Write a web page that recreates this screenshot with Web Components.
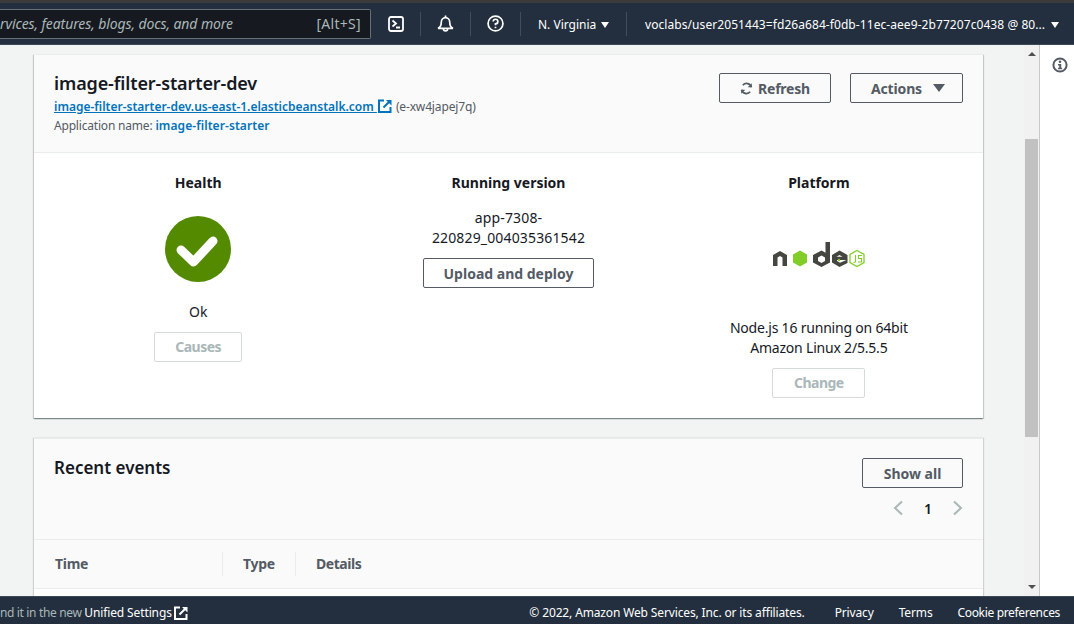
<!DOCTYPE html>
<html lang="en">
<head>
<meta charset="utf-8">
<title>image-filter-starter-dev</title>
<style>
    html, body {
        margin: 0;
        height: 100%;
        overflow: hidden;
        font-family: "Noto Sans", sans-serif;
        color: #16191f;
    }
    body {
        display: flex;
        flex-direction: column;
        height: 624px;
    }
</style>
</head>
<body>
<aws-nav></aws-nav>
<console-area>
    <env-summary></env-summary>
    <recent-events></recent-events>
</console-area>
<aws-footer></aws-footer>

<script>
const externalIcon = (size, color) => `<svg viewBox="0 0 14 14" width="${size}" height="${size}" fill="none" stroke="${color}" stroke-width="2" style="flex:none">
    <path d="M6 1.500H1v11.500h11.500V8"/><path d="M5.500 8.500L12.500 1.500"/><path d="M8 1h5.500v5.500z" fill="${color}" stroke="none"/></svg>`;

class AwsButton extends HTMLElement {
    constructor() {
        super();
        this.shadowDOM = this.attachShadow({mode: "open"});
    }
    connectedCallback() {
        const disabled = this.hasAttribute("disabled");
        this.shadowDOM.innerHTML = `
        <style>
            :host {
                display: inline-flex;
                box-sizing: border-box;
                height: 30px;
                align-items: center;
                justify-content: center;
                gap: 5px;
                padding-bottom: ${disabled ? "1px" : "0"};
                border: 1px solid ${disabled ? "#d5dbdb" : "#545b64"};
                border-radius: 2px;
                background: ${disabled ? "#fff" : "transparent"};
                color: ${disabled ? "#aab7b8" : "#545b64"};
                letter-spacing: ${disabled ? "-0.5px" : "0"};
                font: 700 14px "Noto Sans", sans-serif;
            }
        </style>
        <slot></slot>`;
    }
}
customElements.define("aws-button", AwsButton);

class AwsNav extends HTMLElement {
    constructor() {
        super();
        this.shadowDOM = this.attachShadow({mode: "open"});
    }
    connectedCallback() {
        this.shadowDOM.innerHTML = `
        <style>
            :host {
                display: flex;
                flex: none;
                box-sizing: border-box;
                height: 45px;
                border-top: 3px solid #3b3b3b;
                border-bottom: 1px solid #3c4757;
                background: #232f3e;
                color: #fff;
                align-items: center;
                font: 400 12px "Noto Sans", sans-serif;
                overflow: hidden;
                white-space: nowrap;
            }
            .search {
                flex: none;
                box-sizing: border-box;
                width: 371px;
                height: 30px;
                display: flex;
                align-items: center;
                justify-content: space-between;
                padding: 0 9px 0 0;
                background: #16191f;
                border: 1px solid #687078;
                border-left: 0;
                border-radius: 0 2px 2px 0;
                color: #aab7b8;
                font-size: 14px;
            }
            .search i { font-style: italic; letter-spacing: -.1px; }
            .search span { letter-spacing: .3px; }
            .icon {
                flex: none;
                width: 50px;
                height: 24px;
                display: flex;
                align-items: center;
                justify-content: center;
                border-right: 1px solid #414d5c;
                box-sizing: border-box;
            }
            .region {
                flex: none;
                box-sizing: border-box;
                width: 106px;
                height: 24px;
                padding: 1px 0 0 17px;
                display: flex;
                align-items: center;
                gap: 5px;
                border-right: 1px solid #414d5c;
            }
            .user {
                flex: none;
                padding: 1px 0 0 18px;
                display: flex;
                align-items: center;
                gap: 6px;
                letter-spacing: .07px;
            }
            .tri {
                width: 0;
                height: 0;
                border-left: 4.5px solid transparent;
                border-right: 4.5px solid transparent;
                border-top: 6px solid #fff;
                margin-top: 1px;
            }
        </style>
        <div class="search"><i>rvices, features, blogs, docs, and more</i><span>[Alt+S]</span></div>
        <div class="icon">
            <svg viewBox="0 0 16 16" width="16" height="16" fill="none" stroke="#fff" stroke-width="1.800">
                <rect x="1" y="1" width="14" height="14" rx="2"/><path d="M4.500 4.500L8 7.500l-3.500 3M8 11.500h4"/></svg>
        </div>
        <div class="icon">
            <svg viewBox="0 0 16 16" width="17" height="17" fill="none" stroke="#fff" stroke-width="1.600">
                <path d="M1 12.500c2-1 3-3 3-5.500 0-2.500 1.700-4.500 4-4.500s4 2 4 4.500c0 2.500 1 4.500 3 5.500z"/><path d="M8 .5v2M6 13a2 2 0 0 0 4 0"/></svg>
        </div>
        <div class="icon">
            <svg viewBox="0 0 16 16" width="17" height="17" fill="none" stroke="#fff" stroke-width="1.600">
                <circle cx="8" cy="8" r="7"/><path d="M5.800 6.200A2.200 2.200 0 1 1 8 8.400v1.300M8 11v1.500"/></svg>
        </div>
        <div class="region">N. Virginia <span class="tri"></span></div>
        <div class="user">voclabs/user2051443=fd26a684-f0db-11ec-aee9-2b77207c0438 @ 80... <span class="tri"></span></div>`;
    }
}
customElements.define("aws-nav", AwsNav);

class ConsoleArea extends HTMLElement {
    constructor() {
        super();
        this.shadowDOM = this.attachShadow({mode: "open"});
    }
    connectedCallback() {
        this.shadowDOM.innerHTML = `
        <style>
            :host {
                display: flex;
                flex: 1;
                min-height: 0;
                background: #f2f3f3;
            }
            .content {
                flex: none;
                box-sizing: border-box;
                width: 1024px;
                padding: 9px 41px 0 34px;
                display: flex;
                flex-direction: column;
                gap: 20px;
                overflow: hidden;
            }
            .scrollbar {
                flex: none;
                box-sizing: border-box;
                width: 15px;
                background: #f1f1f1;
                display: flex;
                flex-direction: column;
                align-items: center;
                padding-top: 7px;
            }
            .arrow {
                flex: none;
                width: 0;
                height: 0;
                border-left: 4px solid transparent;
                border-right: 4px solid transparent;
            }
            .arrow.up { border-bottom: 4px solid #505050; }
            .arrow.down { border-top: 4px solid #505050; margin-top: 148px; }
            .thumb {
                flex: none;
                width: 13px;
                height: 298px;
                margin-top: 83px;
                background: #c1c1c1;
            }
            .side {
                flex: 1;
                background: #fff;
                border-left: 1px solid #c8c8c8;
                display: flex;
                justify-content: center;
                padding: 12px 0 0 6px;
                align-items: flex-start;
            }
        </style>
        <div class="content"><slot></slot></div>
        <div class="scrollbar">
            <div class="arrow up"></div>
            <div class="thumb"></div>
            <div class="arrow down"></div>
        </div>
        <div class="side">
            <svg viewBox="0 0 16 16" width="16" height="16">
                <circle cx="8" cy="8" r="6.600" fill="none" stroke="#545b64" stroke-width="2"/>
                <circle cx="8" cy="4.800" r="1.300" fill="#545b64"/>
                <path d="M6 7h3.200v3.800h1v1.500H6v-1.500h1.200V8.400H6z" fill="#545b64"/></svg>
        </div>`;
    }
}
customElements.define("console-area", ConsoleArea);

class EnvSummary extends HTMLElement {
    constructor() {
        super();
        this.shadowDOM = this.attachShadow({mode: "open"});
    }
    connectedCallback() {
        this.shadowDOM.innerHTML = `
        <style>
            :host {
                display: block;
                flex: none;
                height: 364px;
                box-sizing: border-box;
                background: #fff;
                border-top: 1px solid #eaeded;
                box-shadow: 0 1px 1px 0 rgba(0, 28, 36, .3), 1px 1px 1px 0 rgba(0, 28, 36, .15), -1px 1px 1px 0 rgba(0, 28, 36, .15);
                font: 400 14px "Noto Sans", sans-serif;
                color: #16191f;
            }
            header {
                box-sizing: border-box;
                height: 98px;
                background: #fafafa;
                border-bottom: 1px solid #eaeded;
                padding: 16px 20px 0;
                display: flex;
                justify-content: space-between;
            }
            h2 {
                margin: 0;
                font-size: 18px;
                line-height: 24px;
                font-weight: 600;
                letter-spacing: -.12px;
            }
            .url {
                display: flex;
                align-items: center;
                height: 20px;
                margin-top: 1px;
                font-size: 12px;
                color: #545b64;
                white-space: nowrap;
            }
            .url .id { margin-left: 4px; letter-spacing: -.15px; }
            a { color: #0073bb; font-weight: 600; }
            .url a { white-space: pre; margin-right: 1px; }
            .app {
                height: 18px;
                line-height: 18px;
                margin-top: 1px;
                font-size: 12px;
                color: #545b64;
                letter-spacing: -.19px;
            }
            .app a { text-decoration: none; letter-spacing: .08px; }
            .actions { display: flex; gap: 19px; padding-top: 2px; }
            .tri {
                width: 0;
                height: 0;
                border-left: 6px solid transparent;
                border-right: 6px solid transparent;
                border-top: 8px solid #545b64;
                margin-left: 6px;
            }
            .cols {
                display: grid;
                grid-template-columns: repeat(3, 1fr);
                padding: 20px 9px 0;
                text-align: center;
            }
            .col {
                display: flex;
                flex-direction: column;
                align-items: center;
            }
            h3 {
                margin: 0;
                font-size: 14px;
                line-height: 20px;
                font-weight: 700;
            }
            .line { line-height: 20px; }
            .logo { margin-top: 47px; }
            .platform-text { margin-top: 48px; letter-spacing: -.2px; }
        </style>
        <header>
            <div>
                <h2>image-filter-starter-dev</h2>
                <div class="url">
                    <a href="#">image-filter-starter-dev.us-east-1.elasticbeanstalk.com </a>
                    ${externalIcon(14, "#0073bb")}
                    <span class="id">(e-xw4japej7q)</span>
                </div>
                <div class="app">Application name: <a href="#">image-filter-starter</a></div>
            </div>
            <div class="actions">
                <aws-button style="width:112px;letter-spacing:-.2px">
                    <svg viewBox="0 0 16 16" width="13" height="13" fill="none" stroke="#545b64" stroke-width="2.200">
                        <path d="M14 6.500A6 6 0 0 0 3.500 4M2 9.500A6 6 0 0 0 12.500 12"/>
                        <path d="M14.500 1.500v5h-5zM1.500 14.500v-5h5z" fill="#545b64" stroke="none"/></svg>
                    Refresh</aws-button>
                <aws-button style="width:113px;padding-left:3px;letter-spacing:-.15px">Actions <span class="tri"></span></aws-button>
            </div>
        </header>
        <div class="cols">
            <div class="col">
                <h3>Health</h3>
                <svg viewBox="0 0 66 66" width="66" height="66" style="margin-top:23px">
                    <circle cx="33" cy="33" r="33" fill="#538a00"/>
                    <path d="M16 34l12.500 12L48 25" fill="none" stroke="#fff" stroke-width="9" stroke-linecap="round" stroke-linejoin="round"/></svg>
                <div class="line" style="margin-top:20px">Ok</div>
                <aws-button disabled style="width:88px;margin-top:10px">Causes</aws-button>
            </div>
            <div class="col">
                <h3>Running version</h3>
                <div class="line" style="margin-top:15px;width:200px;letter-spacing:.15px">app-7308-<br>220829_004035361542</div>
                <aws-button style="width:171px;margin-top:10px">Upload and deploy</aws-button>
            </div>
            <div class="col">
                <h3>Platform</h3>
                <svg class="logo" viewBox="0 0 94 30" width="94" height="30">
                    <path d="M1 26V15l7-4 7 4v11h-4.500v-8.500L8 16l-2.500 1.500V26z" fill="#444640"/>
                    <path d="M28 10.500l7 4v8l-7 4-7-4v-8z" fill="#83cd29"/>
                    <path d="M53.500 2H58v20.500L49.500 27 41 22.500V15l8.500-4.500 4 2.300z" fill="#444640"/>
                    <path d="M49.500 15.500l3.500 2V21l-3.500 2-3.500-2v-3.500z" fill="#fff"/>
                    <path d="M67.500 10.500L75.500 15v5H65v1l3 1.800 7.500-3.300V23l-8 4-7.500-4.500V15z" fill="#444640"/>
                    <path d="M67.500 15l3 1.700h-6z" fill="#fff"/>
                    <circle cx="67" cy="20" r="1.200" fill="#83cd29"/>
                    <path d="M85 10.500l7 4v8l-7 4-7-4v-8z" fill="none" stroke="#83cd29" stroke-width="1.300"/>
                    <path d="M83.500 15v7l-2 .8M90 15.500h-3.500v3h3V22H86" fill="none" stroke="#83cd29" stroke-width="1.100"/></svg>
                <div class="line platform-text">Node.js 16 running on 64bit<br>Amazon Linux 2/5.5.5</div>
                <aws-button disabled style="width:93px;margin-top:10px">Change</aws-button>
            </div>
        </div>`;
    }
}
customElements.define("env-summary", EnvSummary);

class RecentEvents extends HTMLElement {
    constructor() {
        super();
        this.shadowDOM = this.attachShadow({mode: "open"});
    }
    connectedCallback() {
        this.shadowDOM.innerHTML = `
        <style>
            :host {
                display: block;
                flex: none;
                background: #fafafa;
                border-top: 1px solid #eaeded;
                box-shadow: 1px 0 1px 0 rgba(0, 28, 36, .15), -1px 0 1px 0 rgba(0, 28, 36, .15);
                font: 400 14px "Noto Sans", sans-serif;
                color: #16191f;
            }
            header {
                box-sizing: border-box;
                height: 101px;
                border-bottom: 1px solid #eaeded;
                padding: 19px 20px 0;
                display: flex;
                justify-content: space-between;
            }
            h2 {
                margin: -1px 0 0;
                font-size: 17px;
                line-height: 22px;
                font-weight: 600;
            }
            .tools {
                display: flex;
                flex-direction: column;
                align-items: flex-end;
                gap: 9px;
            }
            .pager {
                display: flex;
                align-items: center;
                gap: 21px;
                height: 22px;
                font-weight: 600;
            }
            .heads {
                box-sizing: border-box;
                height: 49px;
                border-bottom: 1px solid #eaeded;
                display: flex;
                align-items: center;
                color: #545b64;
                font-weight: 700;
                letter-spacing: -.3px;
            }
            .heads div {
                box-sizing: border-box;
                height: 24px;
                line-height: 24px;
                padding-left: 20px;
                border-right: 1px solid #eaeded;
            }
            .heads div:first-child { padding-left: 21px; }
            .heads div:last-child { border-right: 0; letter-spacing: -.45px; }
            .row { height: 7px; background: #fff; }
        </style>
        <header>
            <h2>Recent events</h2>
            <div class="tools">
                <aws-button style="width:101px">Show all</aws-button>
                <div class="pager">
                    <svg viewBox="0 0 10 16" width="10" height="16" fill="none" stroke="#aab7b8" stroke-width="2"><path d="M9 1.500L2 8l7 6.500"/></svg>
                    <span>1</span>
                    <svg viewBox="0 0 10 16" width="10" height="16" fill="none" stroke="#aab7b8" stroke-width="2"><path d="M1 1.500L8 8l-7 6.500"/></svg>
                </div>
            </div>
        </header>
        <div class="heads">
            <div style="width:189px">Time</div>
            <div style="width:73px">Type</div>
            <div>Details</div>
        </div>
        <div class="row"></div>`;
    }
}
customElements.define("recent-events", RecentEvents);

class AwsFooter extends HTMLElement {
    constructor() {
        super();
        this.shadowDOM = this.attachShadow({mode: "open"});
    }
    connectedCallback() {
        this.shadowDOM.innerHTML = `
        <style>
            :host {
                display: flex;
                flex: none;
                box-sizing: border-box;
                height: 28px;
                background: #232f3e;
                border-top: 1px solid #3c4757;
                align-items: center;
                justify-content: space-between;
                padding: 4px 14px 0 0;
                font: 400 12px "Noto Sans", sans-serif;
                color: #fff;
                overflow: hidden;
                white-space: nowrap;
            }
            .feedback {
                display: flex;
                align-items: center;
                gap: 2px;
                color: #aab7b8;
                letter-spacing: -.35px;
            }
            .feedback b { font-weight: 400; color: #fff; letter-spacing: -.12px; }
            .legal { display: flex; align-items: center; letter-spacing: -.14px; }
        </style>
        <div class="feedback">
            <span>nd it in the new <b>Unified Settings</b></span>
            ${externalIcon(14, "#fff")}
        </div>
        <div class="legal">
            <span>© 2022, Amazon Web Services, Inc. or its affiliates.</span>
            <span style="margin-left:30px">Privacy</span>
            <span style="margin-left:25px">Terms</span>
            <span style="margin-left:25px;letter-spacing:-.33px">Cookie preferences</span>
        </div>`;
    }
}
customElements.define("aws-footer", AwsFooter);
</script>
</body>
</html>
